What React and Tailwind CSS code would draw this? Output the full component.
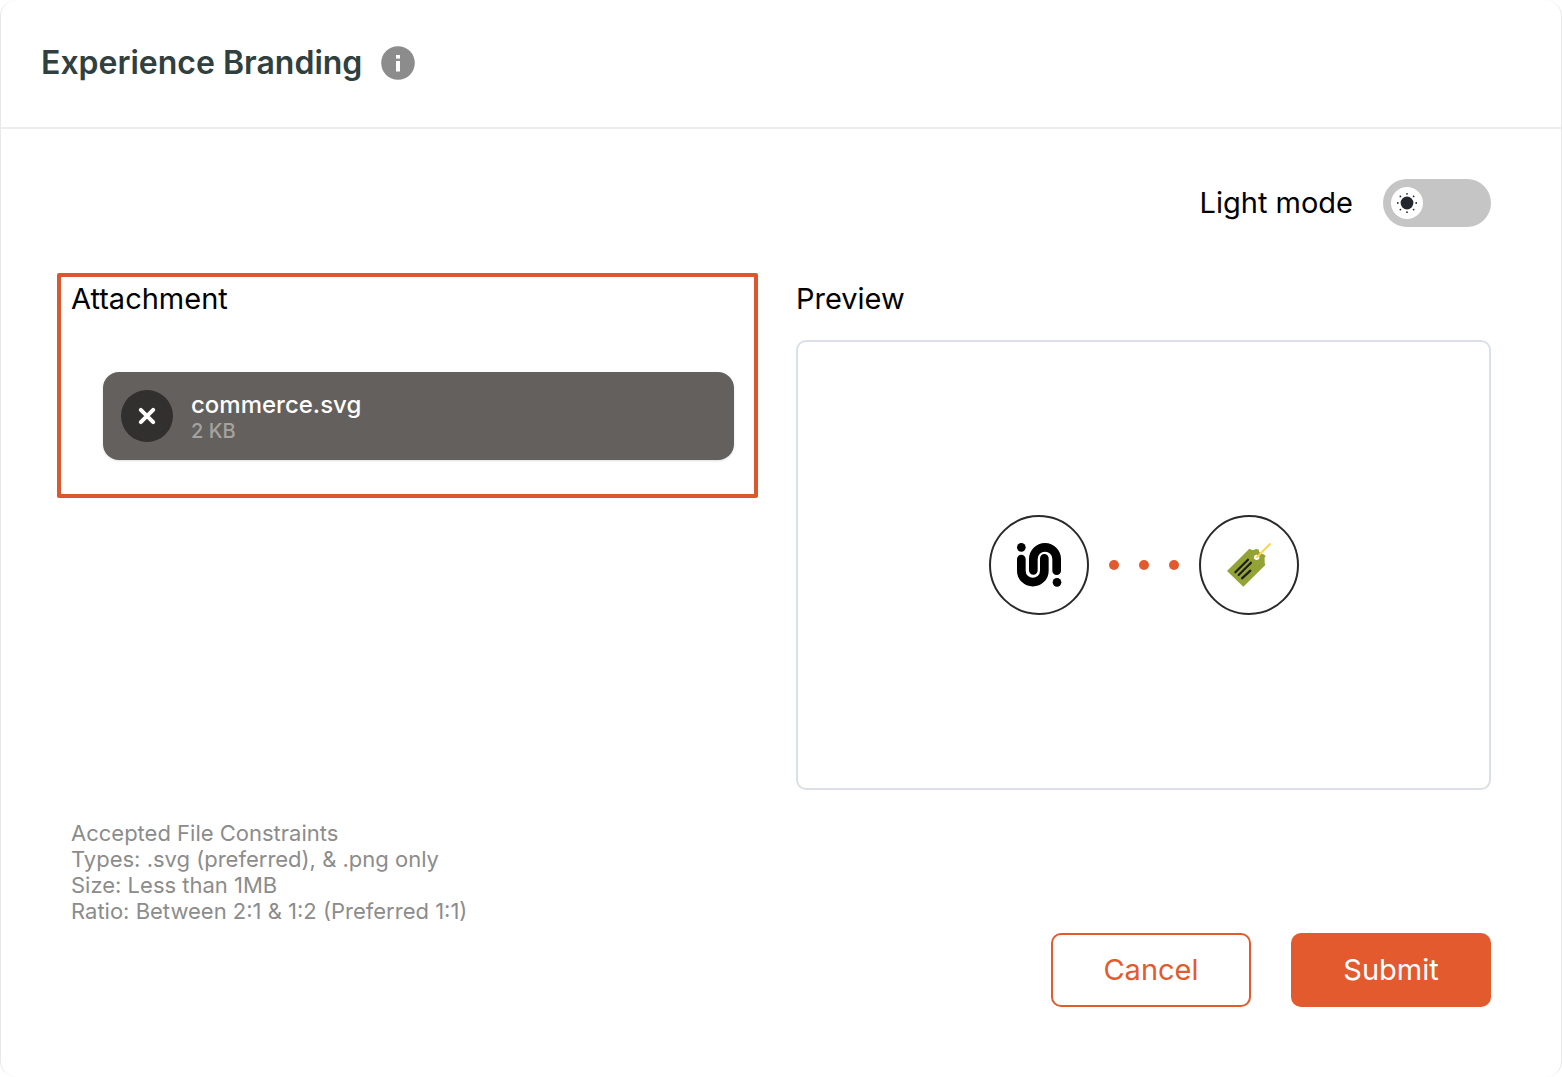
import React, { useState } from 'react';

const CONSTRAINTS = [
  'Types: .svg (preferred), & .png only',
  'Size: Less than 1MB',
  'Ratio: Between 2:1 & 1:2 (Preferred 1:1)',
];

function InfoIcon() {
  return (
    <svg viewBox="0 0 34 34" className="block w-[34px] h-[34px]" aria-hidden="true">
      <circle cx="17" cy="17" r="16.8" fill="#8c8c8c" />
      <rect x="15" y="9" width="4" height="3.6" fill="#fff" />
      <rect x="15" y="15" width="4" height="10.5" fill="#fff" />
    </svg>
  );
}

function SunIcon() {
  return (
    <svg viewBox="0 0 32 32" className="block w-8 h-8" fill="#23272d" aria-hidden="true">
      <circle cx="16" cy="16" r="6.4" />
      <circle cx="16" cy="6.8" r="0.9" />
      <circle cx="16" cy="25.2" r="0.9" />
      <circle cx="6.8" cy="16" r="0.9" />
      <circle cx="25.2" cy="16" r="0.9" />
      <circle cx="9.4" cy="9.4" r="0.9" />
      <circle cx="22.6" cy="9.4" r="0.9" />
      <circle cx="9.4" cy="22.6" r="0.9" />
      <circle cx="22.6" cy="22.6" r="0.9" />
    </svg>
  );
}

function CloseIcon() {
  return (
    <svg viewBox="0 0 52 52" className="block w-[52px] h-[52px]" aria-hidden="true">
      <path d="M19.8 19.8 32.2 32.2M32.2 19.8 19.8 32.2" stroke="#fff" strokeWidth="4" strokeLinecap="round" />
    </svg>
  );
}

// Snake-shaped "iS!" brand mark
function BrandMark() {
  return (
    <svg viewBox="33 36 288 288" className="block w-full h-full" fill="none" stroke="#000" aria-hidden="true">
      <circle cx="124" cy="127" r="13" fill="#000" stroke="none" />
      <circle cx="231" cy="232" r="13" fill="#000" stroke="none" />
      <path d="M124 162V197A34.5 34.5 0 0 0 193 197V160" strokeWidth="26" strokeLinecap="round" />
      <path d="M160 196V162A35 35 0 0 1 230 162V197" strokeWidth="26" strokeLinecap="round" />
    </svg>
  );
}

function TagMark() {
  return (
    <svg viewBox="33 36 288 288" className="block w-full h-full" aria-hidden="true">
      <path d="M111 198 178 131Q185 136 192 135Q199 130 206 134Q207 143 213 146Q221 146 227 153Q221 159 224 166Q223 173 226 180L160 245Z" fill="#94a336" />
      <circle cx="200" cy="157" r="8" fill="#fff" />
      <path d="M201 156 240 117" stroke="#fcd34a" strokeWidth="5.5" strokeLinecap="round" />
      <path d="M136 202 174 164M146 210 183 173M156 220 181 197" stroke="#1c1d1a" strokeWidth="6.5" strokeLinecap="round" />
    </svg>
  );
}

export default function App() {
  const [darkMode, setDarkMode] = useState(false);

  return (
    <div className="min-h-screen bg-white border border-y-0 border-[#e8e8e8] rounded-2xl font-[Inter,sans-serif] text-black">
      <header className="flex items-center gap-[19px] h-[129px] px-10 pb-[2px] border-b-2 border-[#ededed]">
        <h1 className="text-[32px] leading-10 font-semibold text-[#30403f]">Experience Branding</h1>
        <button type="button" aria-label="About experience branding">
          <InfoIcon />
        </button>
      </header>

      <main className="pt-[50px] pl-14 pr-[70px] pb-[70px]">
        <label className="flex items-center justify-end gap-[30px] text-[29px] leading-[48px]">
          Light mode
          <input
            type="checkbox"
            role="switch"
            className="sr-only"
            checked={darkMode}
            onChange={e => setDarkMode(e.target.checked)}
          />
          <span className={`flex w-[108px] h-12 p-2 rounded-full bg-[#c5c5c5] ${darkMode ? 'justify-end' : 'justify-start'}`}>
            <span className="w-8 h-8 rounded-full bg-white">
              <SunIcon />
            </span>
          </span>
        </label>

        <div className="grid grid-cols-[701fr_695fr] gap-x-[38px] items-start mt-[46px]">
          <section className="h-[225px] pl-[10px] pr-5 pt-1 border-4 border-[#dc562e] rounded-xs">
            <h2 className="text-[29px] leading-9">Attachment</h2>
            <div className="flex items-center gap-[18px] h-[88px] mt-[55px] ml-8 px-[18px] rounded-2xl bg-[#64605d] shadow-sm">
              <button type="button" aria-label="Remove file" className="rounded-full bg-[#31302e]">
                <CloseIcon />
              </button>
              <div>
                <p className="text-2xl leading-[30px] font-medium text-white">commerce.svg</p>
                <p className="text-xl leading-[22px] font-medium text-[#a5a3a1]">2 KB</p>
              </div>
            </div>
          </section>

          <section className="pt-2">
            <h2 className="text-[29px] leading-9">Preview</h2>
            <div className="flex items-center justify-center gap-5 h-[450px] mt-[23px] border-2 border-[#dadfe8] rounded-[10px]">
              <div className="w-[100px] h-[100px] rounded-full border-2 border-[#2a2a2c] overflow-hidden">
                <BrandMark />
              </div>
              <div className="flex gap-5">
                <span className="w-[10px] h-[10px] rounded-full bg-[#e25a2d]" />
                <span className="w-[10px] h-[10px] rounded-full bg-[#e25a2d]" />
                <span className="w-[10px] h-[10px] rounded-full bg-[#e25a2d]" />
              </div>
              <div className="w-[100px] h-[100px] rounded-full border-2 border-[#2a2a2c] overflow-hidden">
                <TagMark />
              </div>
            </div>
          </section>
        </div>

        <div className="mt-[30px] pl-[14px] text-[22px] leading-[26px] text-[#8c8c8c]">
          <p>Accepted File Constraints</p>
          {CONSTRAINTS.map(line => (
            <p key={line}>{line}</p>
          ))}
        </div>

        <div className="flex justify-end gap-10 mt-[9px] text-[29px]">
          <button type="button" className="w-[200px] h-[74px] border-2 border-[#e25a2d] rounded-[10px] text-[#e25a2d]">
            Cancel
          </button>
          <button type="submit" className="w-[200px] h-[74px] rounded-[10px] bg-[#e25a2d] text-white">
            Submit
          </button>
        </div>
      </main>
    </div>
  );
}
